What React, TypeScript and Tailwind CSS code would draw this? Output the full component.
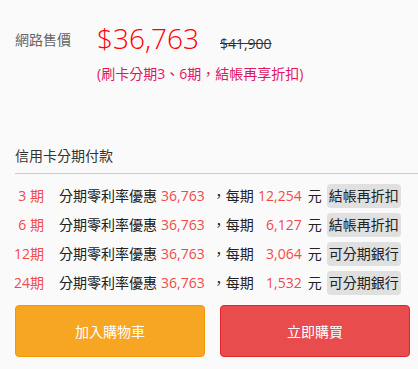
const rows = [
  { period: "3 期", per: "12,254", tag: "結帳再折扣" },
  { period: "6 期", per: "6,127", tag: "結帳再折扣" },
  { period: "12期", per: "3,064", tag: "可分期銀行" },
  { period: "24期", per: "1,532", tag: "可分期銀行" },
];

export default function App() {
  return (
    <div
      className="w-[418px] h-[369px] bg-[#fafafa] pl-[15px] pr-[8px] pt-[22px] text-[14px] text-[#222] overflow-hidden"
      style={{ fontFamily: '"Open Sans", "Noto Sans CJK TC", sans-serif' }}
    >
      {/* Price */}
      <div className="flex items-start">
        <div className="w-[82px] mt-[8px] leading-[20px] text-[#666]">網路售價</div>
        <div className="flex items-baseline">
          <span className="text-[28px] leading-[32px] font-light text-[#ff0000]">$36,763</span>
          <span className="ml-[21px] leading-[20px] text-[#333] line-through">$41,900</span>
        </div>
      </div>
      <div className="ml-[82px] mt-[10px] leading-[20px] text-[#e0185e] whitespace-nowrap">
        (刷卡分期3、6期，結帳再享折扣)
      </div>

      {/* Installments */}
      <div className="mt-[62px] leading-[20px] text-[#333]">信用卡分期付款</div>
      <div className="mt-[7px] -mr-[8px] border-t border-[#cccccc]"></div>

      <div className="mt-[10px] flex flex-col gap-[5px]">
        {rows.map((r) => (
          <div key={r.period} className="flex items-center h-[24px] leading-[20px] whitespace-nowrap">
            <span className="-ml-px w-[30px] text-right text-[#f24a4a]">{r.period}</span>
            <span className="ml-[15px]">分期零利率優惠</span>
            <span className="ml-[4px] text-[#f24a4a]">36,763</span>
            <span className="ml-[7px]">，每期</span>
            <span className="w-[48px] text-right text-[#f24a4a]">{r.per}</span>
            <span className="ml-[6px]">元</span>
            <span className="ml-[5px] h-[24px] flex items-center px-[2px] rounded-[4px] bg-[#e0e0e0]">
              {r.tag}
            </span>
          </div>
        ))}
      </div>

      {/* Buttons */}
      <div className="mt-[10px] flex gap-[15px]">
        <button className="w-[190px] h-[52px] rounded-[4px] border border-[#f39800] bg-[#f7a623] text-white">
          加入購物車
        </button>
        <button className="w-[190px] h-[52px] rounded-[4px] border border-[#e0262b] bg-[#e84c4c] text-white">
          立即購買
        </button>
      </div>
    </div>
  );
}
